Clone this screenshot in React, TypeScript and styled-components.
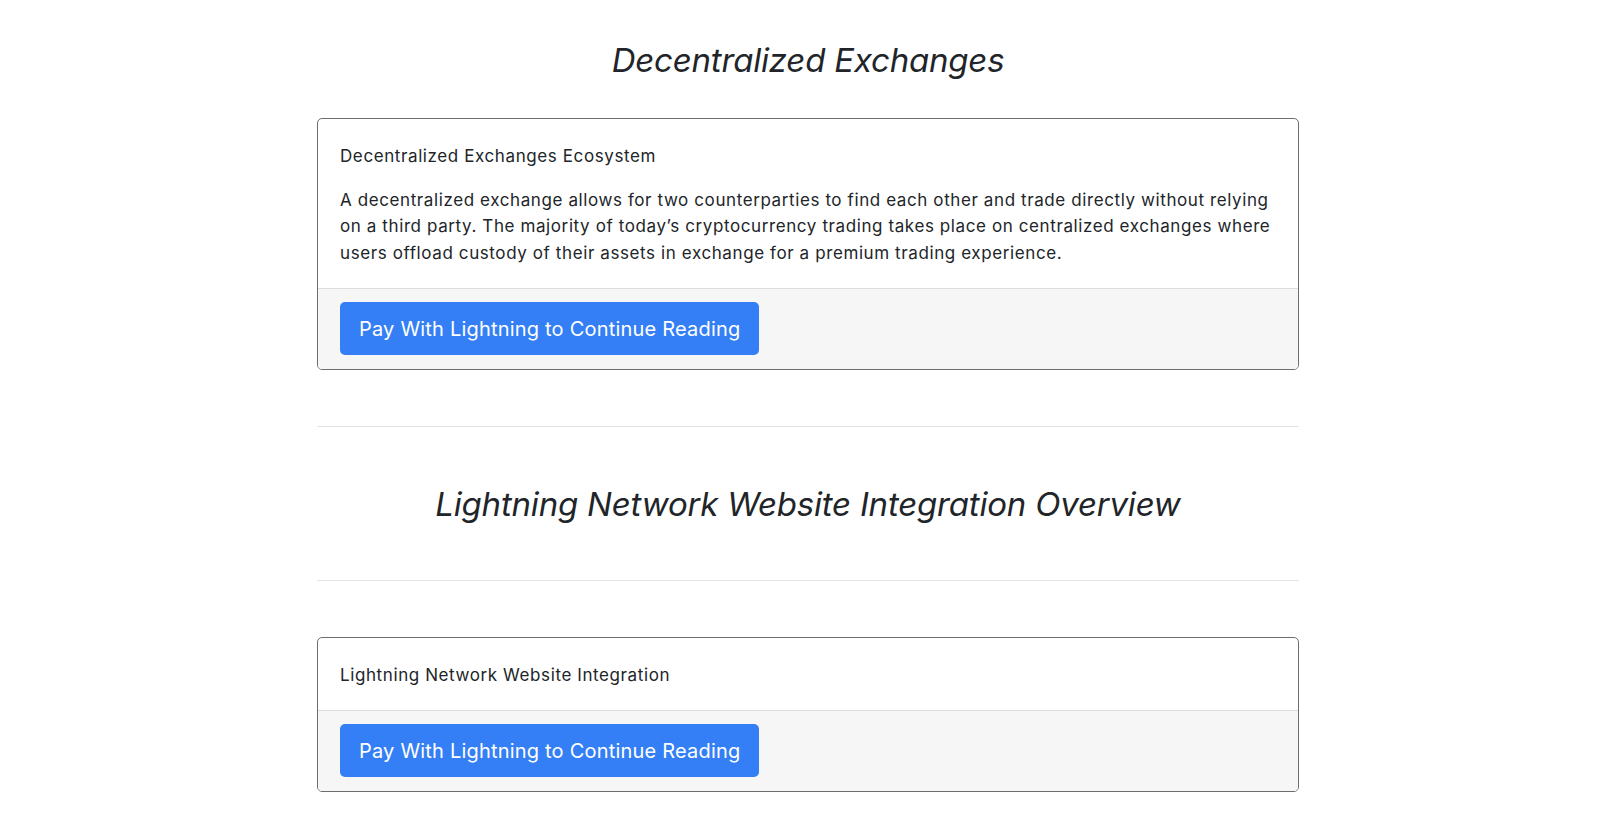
import styled, { createGlobalStyle } from 'styled-components';

const GlobalStyle = createGlobalStyle`
  html, body {
    margin: 0;
    padding: 0;
    background: #ffffff;
  }
  body {
    font-family: Inter, "Noto Sans", "Liberation Sans", sans-serif;
    color: #212529;
    -webkit-font-smoothing: antialiased;
  }
  * {
    box-sizing: border-box;
  }
`;

type Article = {
  title: string;
  body?: string;
};

const Page = styled.div`
  padding-left: 16px;
`;

const Container = styled.main`
  width: 982px;
  margin: 0 auto;
  padding-bottom: 40px;
`;

const SectionTitle = styled.h1<{ $top: number; $bottom: number }>`
  margin: ${(p) => p.$top}px 0 ${(p) => p.$bottom}px;
  font-size: 33px;
  line-height: 41px;
  font-weight: 400;
  font-style: italic;
  text-align: center;
  letter-spacing: -0.2px;
  color: #212529;
`;

const Rule = styled.hr<{ $top: number; $bottom: number }>`
  margin: ${(p) => p.$top}px 0 ${(p) => p.$bottom}px;
  border: 0;
  border-top: 1px solid #e3e3e3;
  height: 0;
`;

const Card = styled.section`
  border: 1px solid #6a6e72;
  border-radius: 5px;
  overflow: hidden;
  background: #ffffff;
`;

const CardBody = styled.div`
  padding: 24px 22px 21.5px;
  font-size: 17px;
  line-height: 26.5px;
  letter-spacing: 0.6px;
`;

const CardHeading = styled.h2`
  margin: 0;
  font-size: 17px;
  font-weight: 400;
  line-height: 26.5px;
`;

const CardText = styled.p`
  margin: 17px 0 0;
`;

const CardFooter = styled.div`
  padding: 13.5px 22px 13.5px;
  background: #f6f6f6;
  border-top: 1px solid #dddddd;
`;

const PayButton = styled.button`
  display: block;
  height: 53px;
  padding: 0 19px;
  border: 0;
  border-radius: 5px;
  background: #347ff5;
  color: #ffffff;
  font-family: inherit;
  font-size: 20px;
  font-weight: 400;
  letter-spacing: 0.2px;
  cursor: pointer;
`;

function ArticleCard({ article }: { article: Article }) {
  return (
    <Card>
      <CardBody>
        <CardHeading>{article.title}</CardHeading>
        {article.body && <CardText>{article.body}</CardText>}
      </CardBody>
      <CardFooter>
        <PayButton type="button">Pay With Lightning to Continue Reading</PayButton>
      </CardFooter>
    </Card>
  );
}

const dex: Article = {
  title: 'Decentralized Exchanges Ecosystem',
  body:
    'A decentralized exchange allows for two counterparties to find each other and trade directly without relying on a third party. The majority of today\u2019s cryptocurrency trading takes place on centralized exchanges where users offload custody of their assets in exchange for a premium trading experience.',
};

const lightning: Article = {
  title: 'Lightning Network Website Integration',
};

export default function App() {
  return (
    <>
      <GlobalStyle />
      <Page>
        <Container>
          <SectionTitle $top={40} $bottom={37}>
            Decentralized Exchanges
          </SectionTitle>
          <ArticleCard article={dex} />
          <Rule $top={56} $bottom={57} />
          <SectionTitle $top={0} $bottom={55}>
            Lightning Network Website Integration Overview
          </SectionTitle>
          <Rule $top={0} $bottom={56} />
          <ArticleCard article={lightning} />
        </Container>
      </Page>
    </>
  );
}
